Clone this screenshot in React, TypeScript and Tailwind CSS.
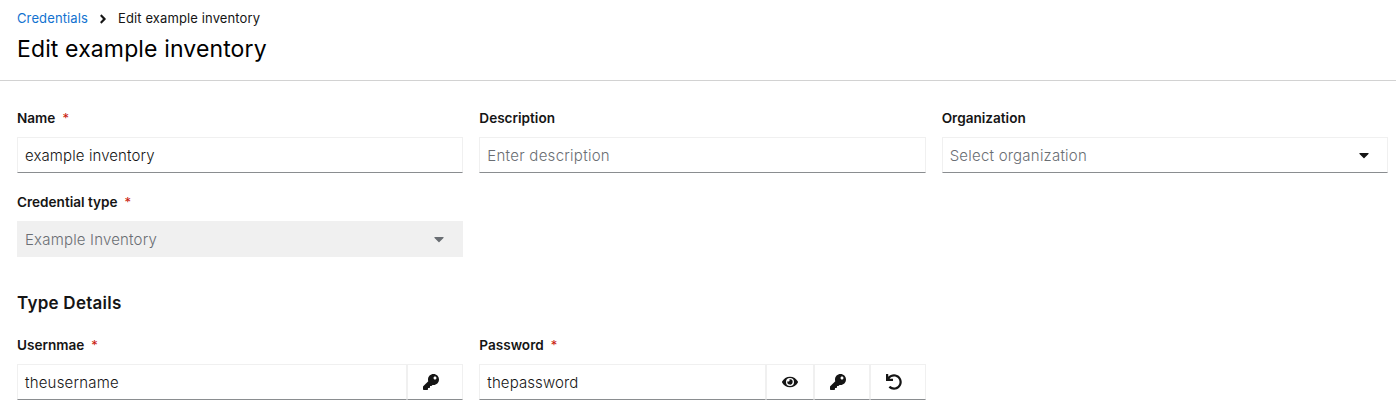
import type { ReactNode } from 'react';
import { FaAngleRight, FaCaretDown, FaKey, FaEye, FaUndo } from 'react-icons/fa';

function Label({ children, required }: { children: string; required?: boolean }) {
  return (
    <div className="flex h-[21px] items-center text-[13.6px] font-semibold leading-[21px] tracking-[-0.01px] text-[#151515]">
      <span>{children}</span>
      {required && <span className="ml-[7px] text-[13px] font-normal text-[#c9190b]">*</span>}
    </div>
  );
}

function Box({ children }: { children: ReactNode }) {
  return (
    <div className="mt-2 flex h-9 items-center border border-[#f0f0f0] border-b-[#8a8d90] pl-[7px]">
      {children}
    </div>
  );
}

function InputText({ children, muted, tracking = 'tracking-[0.1px]' }: { children: string; muted?: boolean; tracking?: string }) {
  return (
    <span className={`pt-0.5 text-[15px] font-[350] leading-6 ${tracking} ${muted ? 'text-[#6a6e73]' : 'text-[#151515]'}`}>
      {children}
    </span>
  );
}

function Segment({ children, width }: { children: ReactNode; width: string }) {
  return (
    <div className={`${width} flex h-9 shrink-0 items-center border border-[#f0f0f0] border-b-[#8a8d90] pl-[15px] text-base text-[#151515]`}>
      {children}
    </div>
  );
}

export default function App() {
  return (
    <main className="h-[419px] w-full overflow-hidden bg-white font-['Inter','Liberation_Sans',sans-serif] text-[#151515]">
      <header className="h-[81px] border-b border-[#d2d2d2] pl-[17px] pt-2">
        <nav className="flex h-[21px] items-center text-[13px] leading-[21px] tracking-[0.12px]">
          <a className="w-[71px] whitespace-nowrap text-[#1272d0]">Credentials</a>
          <FaAngleRight className="ml-2 size-3.5" />
          <span className="ml-2 whitespace-nowrap">Edit example inventory</span>
        </nav>
        <h1 className="mt-[5px] text-[23px] leading-[31px] tracking-[0.13px] text-black">Edit example inventory</h1>
      </header>
      <section className="grid grid-cols-3 gap-x-4 gap-y-[19px] pl-[17px] pr-2 pt-[27px]">
        <div>
          <Label required>Name</Label>
          <Box><InputText>example inventory</InputText></Box>
        </div>
        <div>
          <Label>Description</Label>
          <Box><InputText muted tracking="tracking-[0.27px]">Enter description</InputText></Box>
        </div>
        <div>
          <Label>Organization</Label>
          <Box>
            <InputText muted tracking="tracking-[0.22px]">Select organization</InputText>
            <FaCaretDown className="ml-auto mr-[15px] size-4" />
          </Box>
        </div>
        <div>
          <Label required>Credential type</Label>
          <div className="mt-2 flex h-9 items-center bg-[#f0f0f0] pl-2 text-[#6a6e73]">
            <InputText muted tracking="tracking-[0.18px]">Example Inventory</InputText>
            <FaCaretDown className="ml-auto mr-4 size-4" />
          </div>
        </div>
      </section>
      <section className="pl-[17px] pr-2 pt-[33px]">
        <h2 className="text-[17px] font-semibold leading-[27px] tracking-[0.25px]">Type Details</h2>
        <div className="mt-[18px] grid grid-cols-3 gap-x-4">
          <div>
            <Label required>Usernmae</Label>
            <div className="mt-2 flex">
              <div className="flex h-9 flex-1 items-center border border-[#f0f0f0] border-b-[#8a8d90] pl-[7px]">
                <InputText tracking="tracking-[0.2px]">theusername</InputText>
              </div>
              <Segment width="w-14"><FaKey /></Segment>
            </div>
          </div>
          <div>
            <Label required>Password</Label>
            <div className="mt-2 flex">
              <div className="flex h-9 flex-1 items-center border border-[#f0f0f0] border-b-[#8a8d90] pl-[7px]">
                <InputText>thepassword</InputText>
              </div>
              <Segment width="w-12"><FaEye /></Segment>
              <Segment width="w-14"><FaKey /></Segment>
              <Segment width="w-14"><FaUndo /></Segment>
            </div>
          </div>
        </div>
      </section>
    </main>
  );
}
